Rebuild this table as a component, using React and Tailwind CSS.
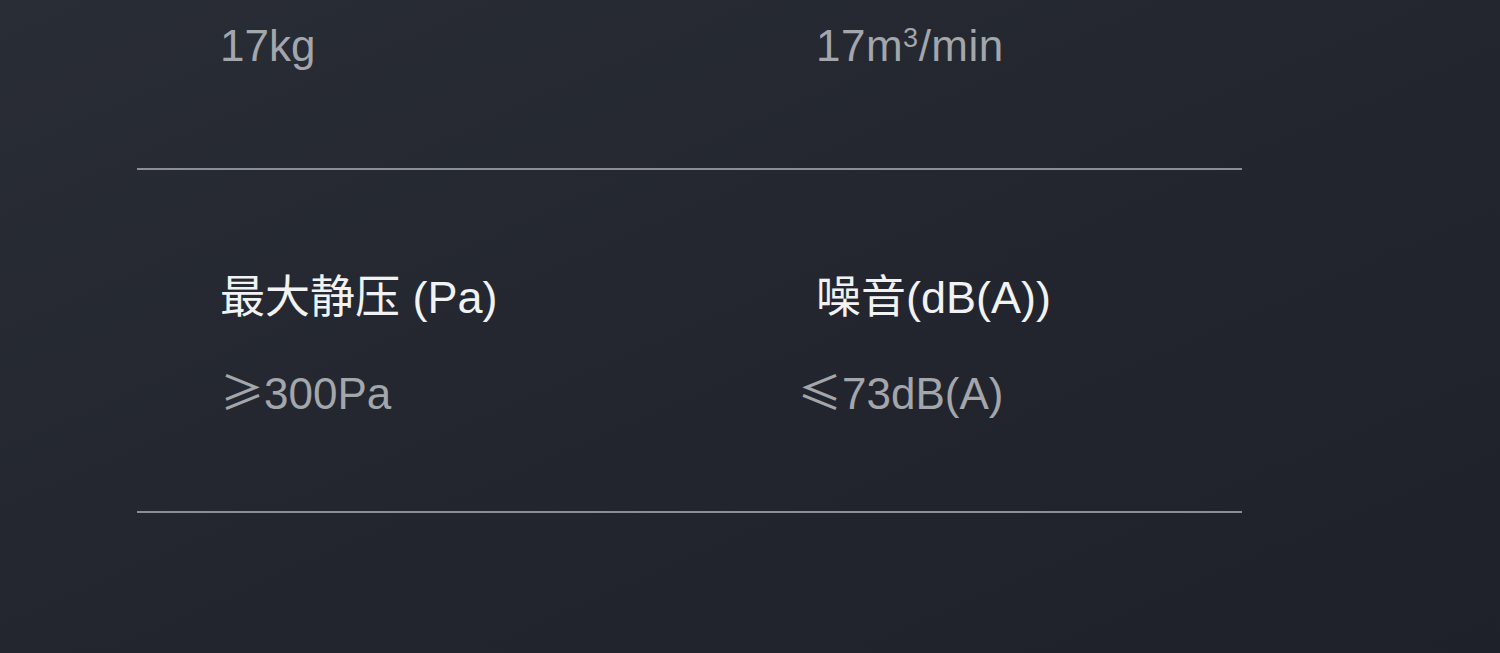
export default function App() {
  const latin = { fontFamily: '"Liberation Sans", "Noto Sans CJK SC", sans-serif' };
  const cjk = { fontFamily: '"Noto Sans CJK SC", sans-serif' };
  return (
    <div
      className="w-[1500px] h-[653px] overflow-hidden bg-gradient-to-br from-[#292d35] via-[#23262e] to-[#1e2129]"
      style={latin}
    >
      <div className="ml-[137px] w-[1105px]">
        <div className="grid grid-cols-[596px_1fr] items-start pl-[83px] pt-[21px] h-[168px]">
          <div className="text-[44px] leading-[50px] text-[#a3a6ab]">17kg</div>
          <div className="text-[44px] leading-[50px] text-[#a3a6ab] tracking-[0.5px]">
            17m<span className="text-[27px] leading-[0] align-[14px]">3</span>/min
          </div>
        </div>
        <div className="h-[2px] bg-[#8b8e94]" />
        <div className="grid grid-cols-[596px_1fr] pl-[83px] pt-[99px] h-[341px]">
          <div>
            <div className="text-[45px] leading-[50px] text-[#f1f2f3]">
              <span style={cjk}>最大静压</span> (Pa)
            </div>
            <div className="mt-[42px] text-[44px] leading-[50px] text-[#a3a6ab]">
              <span style={cjk}>≥</span>300Pa
            </div>
          </div>
          <div>
            <div className="text-[45px] leading-[50px] text-[#f1f2f3]">
              <span style={cjk}>噪音</span>(dB(A))
            </div>
            <div className="mt-[42px] -ml-[18px] text-[44px] leading-[50px] text-[#a3a6ab]">
              <span style={cjk}>≤</span>73dB(A)
            </div>
          </div>
        </div>
        <div className="h-[2px] bg-[#8b8e94]" />
      </div>
    </div>
  );
}
